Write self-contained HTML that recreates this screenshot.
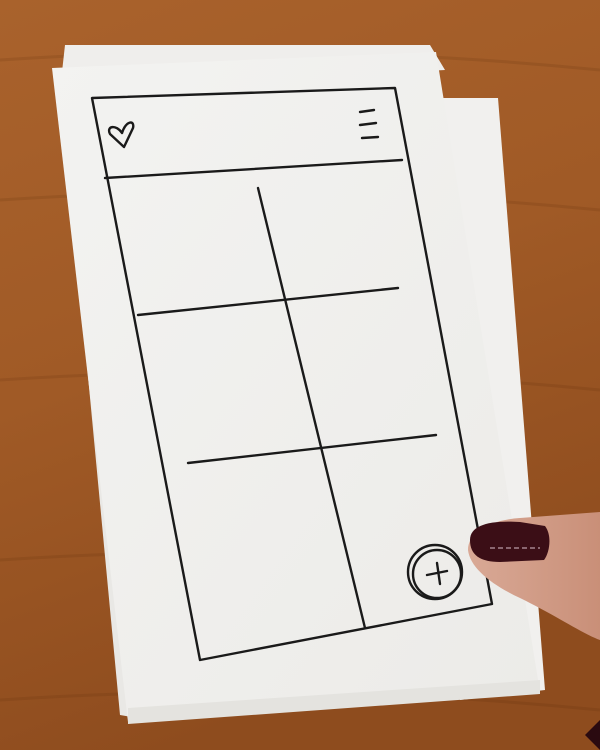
<!DOCTYPE html>
<html><head><meta charset="utf-8"><style>
html,body{margin:0;padding:0;width:600px;height:750px;overflow:hidden;background:#a15a28}
svg{display:block}
</style></head><body>
<svg width="600" height="750" viewBox="0 0 600 750" xmlns="http://www.w3.org/2000/svg">
<defs>
<linearGradient id="wood" x1="0" y1="0" x2="0.3" y2="1">
<stop offset="0" stop-color="#a9622c"/><stop offset="0.5" stop-color="#a05a26"/><stop offset="1" stop-color="#8e4c1e"/>
</linearGradient>
<linearGradient id="paper" x1="0" y1="0" x2="1" y2="1">
<stop offset="0" stop-color="#f3f3f1"/><stop offset="1" stop-color="#ecebe8"/>
</linearGradient>
<linearGradient id="skin" x1="0" y1="0" x2="1" y2="0">
<stop offset="0" stop-color="#d9a996"/><stop offset="1" stop-color="#c98f78"/>
</linearGradient>
</defs>
<rect width="600" height="750" fill="url(#wood)"/>
<g opacity="0.15" stroke="#5a2a0a" stroke-width="3" fill="none">
<path d="M0 60 Q300 40 600 70"/><path d="M0 200 Q300 180 600 210"/><path d="M0 380 Q300 360 600 390"/><path d="M0 560 Q300 540 600 570"/><path d="M0 700 Q300 680 600 710"/>
</g>
<!-- back sheets -->
<polygon points="65,45 430,45 445,70 60,90" fill="#efeeec"/>
<polygon points="440,98 498,98 545,690 460,700" fill="#f1f0ee"/>
<polygon points="60,80 100,90 150,720 120,715" fill="#e9e8e5"/>
<!-- main sheet -->
<polygon points="52,68 436,52 540,692 128,722" fill="url(#paper)"/>
<polygon points="128,708 540,680 540,694 128,724" fill="#e4e3df"/>
<!-- wireframe -->
<g fill="none" stroke="#1a1a1a" stroke-width="2.4" stroke-linecap="round" stroke-linejoin="round">
<path d="M92,98 L395,88 L492,604 L200,660 Z"/>
<path d="M105,178 L402,160"/>
<path d="M258,188 L365,628"/>
<path d="M138,315 L398,288"/>
<path d="M188,463 L436,435"/>
<path d="M122,133 C116,124 106,126 110,134 L124,147 L133,128 C135,120 126,120 122,133"/>
<path d="M360,112 L374,110"/><path d="M360,125 L376,123"/><path d="M362,138 L378,137"/>
<circle cx="435" cy="572" r="27"/>
<circle cx="437" cy="574" r="24"/>
<path d="M427,575 L447,571"/><path d="M437,563 L440,584"/>
</g>
<!-- finger -->
<path d="M600,512 L520,518 C490,520 468,532 468,550 C470,568 492,585 520,598 C555,615 585,635 600,640 Z" fill="url(#skin)"/>
<path d="M470,540 C470,525 490,520 520,522 L545,526 C552,535 550,552 544,560 L500,562 C480,562 470,555 470,540 Z" fill="#3b0e16"/>
<path d="M490,548 L540,548" stroke="#8a6670" stroke-width="2" stroke-dasharray="5 3"/>
<path d="M600,720 L585,735 L600,750 Z" fill="#2a0a10"/>
</svg>
</body></html>
